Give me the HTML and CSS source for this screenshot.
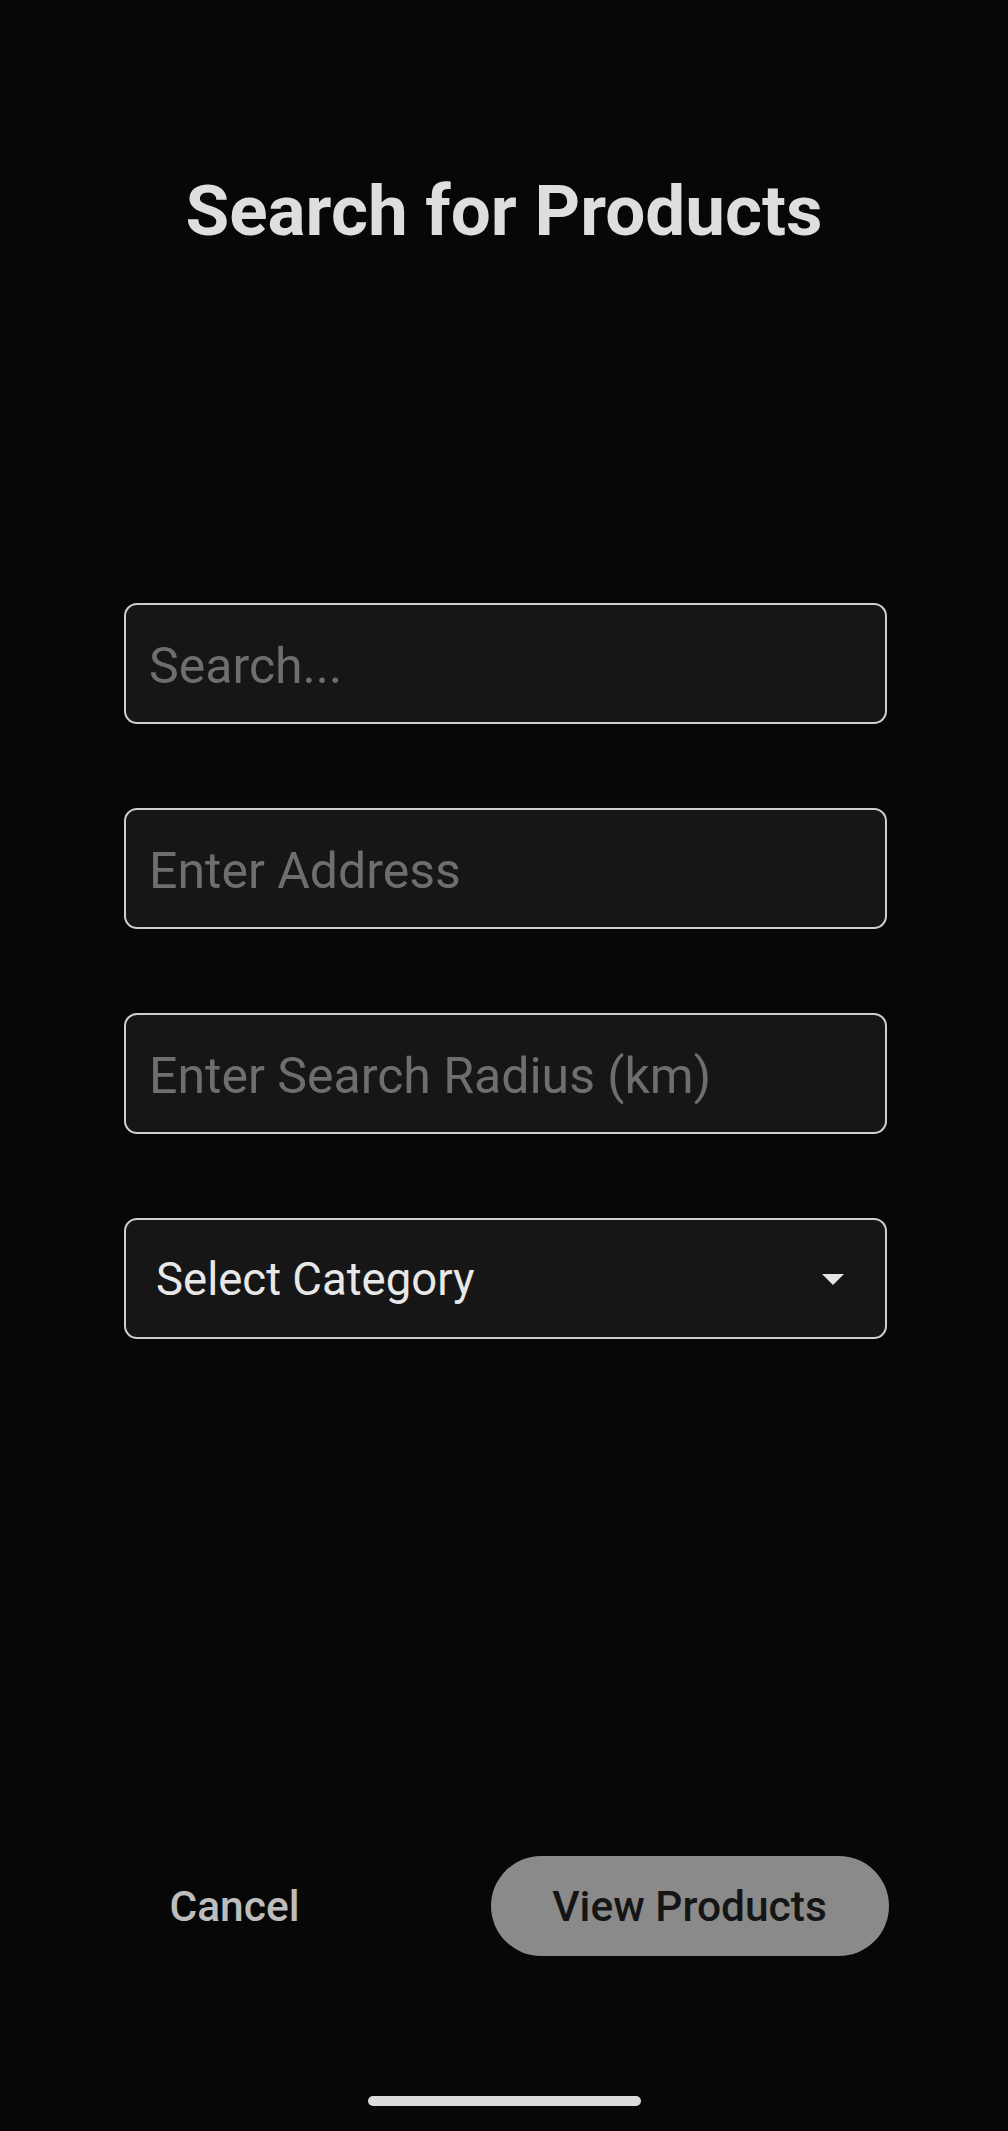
FILE: index.html
```html
<!DOCTYPE html>
<html lang="en">
<head>
<meta charset="utf-8">
<title>Search for Products</title>
<link rel="stylesheet" href="styles.css">
</head>
<body>
<div class="screen">
  <h1 class="title">Search for Products</h1>
  <div class="form">
    <div class="field"><span class="placeholder">Search...</span></div>
    <div class="field"><span class="placeholder">Enter Address</span></div>
    <div class="field"><span class="placeholder">Enter Search Radius (km)</span></div>
    <div class="field select">
      <span class="select-label">Select Category</span>
      <svg class="arrow" width="24" height="12" viewBox="0 0 24 12"><path d="M1 0 L23 0 L12 11 Z" fill="#e6e6e6"/></svg>
    </div>
  </div>
  <div class="actions">
    <button class="btn-text">Cancel</button>
    <button class="btn-filled">View Products</button>
  </div>
  <div class="home-bar"></div>
</div>
</body>
</html>
```
FILE: styles.css
```css
html, body {
  margin: 0;
  padding: 0;
  background: #070707;
}
.screen {
  width: 1008px;
  height: 2131px;
  display: flex;
  flex-direction: column;
  align-items: center;
  font-family: Roboto, "Noto Sans", sans-serif;
  overflow: hidden;
}
.title {
  margin: 170px 0 0;
  font-size: 71px;
  line-height: 82px;
  font-weight: 700;
  color: #dedede;
  text-align: center;
}
.form {
  margin-top: 351px;
  display: flex;
  flex-direction: column;
  gap: 84px;
  width: 763px;
  margin-left: 3px;
}
.field {
  box-sizing: border-box;
  height: 121px;
  border: 2px solid #cfcfcf;
  border-radius: 13px;
  background: #161616;
  display: flex;
  align-items: center;
  padding: 4px 24px 0 23px;
}
.placeholder {
  font-size: 50px;
  color: #6e6e6e;
  line-height: 1;
}
.select {
  padding: 2px 40px 0 30px;
  justify-content: space-between;
}
.select-label {
  font-size: 45.5px;
  color: #e8e8e8;
  line-height: 1;
}
.arrow {
  display: block;
}
.actions {
  margin-top: 517px;
  width: 766px;
  margin-left: 3px;
  display: flex;
  justify-content: space-between;
  align-items: center;
}
.btn-text, .btn-filled {
  font-family: Roboto, "Noto Sans", sans-serif;
  font-weight: 500;
  font-size: 42.5px;
  border: none;
  height: 100px;
  padding: 0;
  cursor: pointer;
}
.btn-text {
  width: 224px;
  background: transparent;
  color: #bdbdbd;
}
.btn-filled {
  width: 398px;
  border-radius: 50px;
  background: #8a8a8a;
  color: #151515;
}
.home-bar {
  margin-top: 140px;
  width: 273px;
  height: 10px;
  border-radius: 5px;
  background: #dcdcdc;
}
```
